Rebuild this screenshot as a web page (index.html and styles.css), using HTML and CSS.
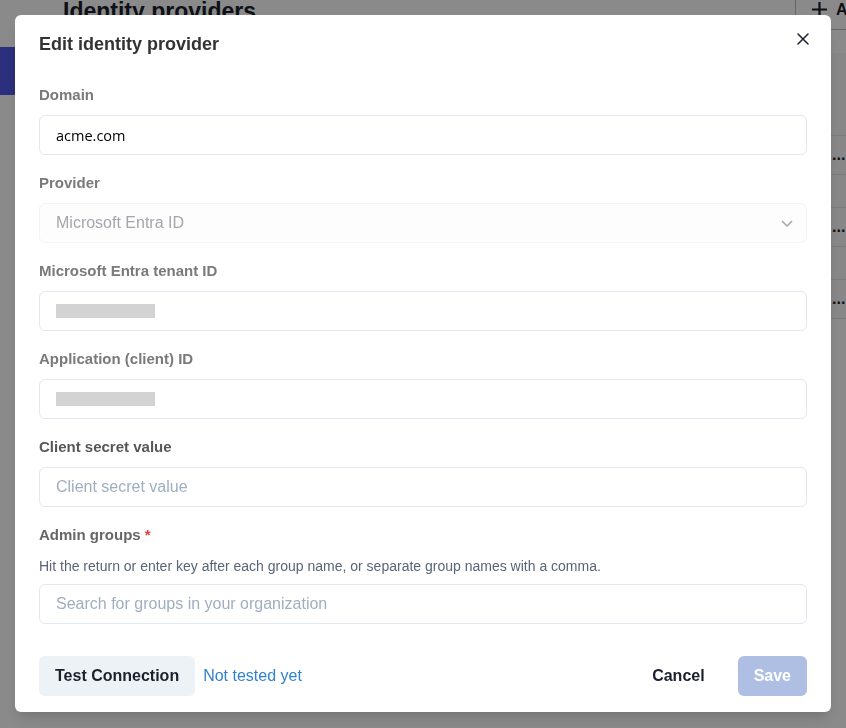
FILE: index.html
```html
<!DOCTYPE html>
<html lang="en">
<head>
<meta charset="utf-8">
<title>Edit identity provider</title>
<link rel="stylesheet" href="styles.css">
</head>
<body>
<div class="page">
  <nav class="side">
    <div class="nav-active"></div>
  </nav>
  <main class="main">
    <header class="page-header">
      <h1 class="page-title">Identity providers</h1>
      <button class="add-btn" type="button">
        <svg class="plus" width="15" height="15" viewBox="0 0 15 15"><path d="M7.5 0v15M0 7.5h15" stroke="#1a202c" stroke-width="2.2" fill="none"/></svg>
        <span>Add</span>
      </button>
    </header>
    <section class="table">
      <div class="table-head"></div>
      <div class="row"><div class="row-main"><span></span><span class="dots">...</span></div></div>
      <div class="row"><div class="row-main"><span></span><span class="dots">...</span></div></div>
      <div class="row row-last"><div class="row-main"><span></span><span class="dots">...</span></div></div>
    </section>
  </main>
</div>

<div class="overlay"></div>

<div class="modal" role="dialog" aria-label="Edit identity provider">
  <header class="modal-header">
    <h2 class="modal-title">Edit identity provider</h2>
    <button class="close-btn" type="button" aria-label="Close">
      <svg width="12" height="12" viewBox="0 0 12 12"><path d="M1 1L11 11M11 1L1 11" stroke="#1a202c" stroke-width="1.5" fill="none" stroke-linecap="round"/></svg>
    </button>
  </header>
  <div class="modal-body">
    <div class="field">
      <label class="label label-muted">Domain</label>
      <input class="input input-value" type="text" value="acme.com">
    </div>
    <div class="field">
      <label class="label label-muted">Provider</label>
      <div class="select select-disabled">
        <span>Microsoft Entra ID</span>
        <svg width="12" height="7" viewBox="0 0 12 7"><path d="M1 1l5 5 5-5" stroke="#a3a6ab" stroke-width="1.5" fill="none"/></svg>
      </div>
    </div>
    <div class="field">
      <label class="label label-muted">Microsoft Entra tenant ID</label>
      <div class="input"><span class="redacted"></span></div>
    </div>
    <div class="field">
      <label class="label label-muted">Application (client) ID</label>
      <div class="input"><span class="redacted"></span></div>
    </div>
    <div class="field">
      <label class="label label-dark">Client secret value</label>
      <input class="input" type="text" placeholder="Client secret value">
    </div>
    <div class="field field-last">
      <label class="label label-mid">Admin groups<span class="req">*</span></label>
      <p class="help">Hit the return or enter key after each group name, or separate group names with a comma.</p>
      <input class="input" type="text" placeholder="Search for groups in your organization">
    </div>
  </div>
  <footer class="modal-footer">
    <button class="btn btn-gray" type="button">Test Connection</button>
    <span class="status">Not tested yet</span>
    <span class="spacer"></span>
    <button class="btn btn-ghost" type="button">Cancel</button>
    <button class="btn btn-primary" type="button" disabled>Save</button>
  </footer>
</div>
</body>
</html>
```

FILE: styles.css
```css
html, body {
  margin: 0;
  height: 100%;
  overflow: hidden;
}

body {
  font-family: "Liberation Sans", Arial, sans-serif;
  background: #ffffff;
  color: #1a202c;
}

/* ---------- background page ---------- */
.page {
  width: 945px;
  display: grid;
  grid-template-columns: 48px 1fr;
}

.side {
  padding-top: 47px;
}

.nav-active {
  height: 48px;
  background: #5158e6;
}

.main {
  padding-left: 15px;
}

.page-header {
  display: flex;
  align-items: flex-start;
  height: 30px;
}

.page-title {
  flex: 1;
  margin: 0;
  font-size: 23px;
  line-height: 23px;
  font-weight: 700;
  color: #1a202c;
}

.add-btn {
  flex: none;
  box-sizing: border-box;
  width: 150px;
  height: 41px;
  margin-top: -11px;
  padding: 0 0 0 16px;
  display: flex;
  align-items: center;
  gap: 9px;
  background: #ffffff;
  border: 1px solid #b8bfc9;
  font-family: inherit;
  font-size: 16px;
  font-weight: 700;
  color: #1a202c;
}

.plus {
  flex: none;
}

.table {
  margin-top: 23px;
  background: #f9fafb;
}

.table-head {
  height: 82px;
}

.row {
  height: 72px;
  box-sizing: border-box;
  border-top: 1px solid #dde2ea;
}

.row-last {
  height: auto;
}

.row-main {
  height: 39px;
  box-sizing: border-box;
  border-bottom: 1px solid #dde2ea;
  display: grid;
  grid-template-columns: 1fr 113px;
  line-height: 38px;
}

.dots {
  font-size: 16px;
  font-weight: 700;
  color: #1a202c;
}

/* ---------- overlay & modal ---------- */
.overlay {
  position: fixed;
  inset: 0;
  background: rgba(0, 0, 0, 0.46);
}

.modal {
  position: fixed;
  top: 15px;
  left: 15px;
  width: 816px;
  background: #ffffff;
  border-radius: 6px;
  box-shadow: 0 10px 15px -3px rgba(0, 0, 0, 0.12), 0 4px 6px -2px rgba(0, 0, 0, 0.06);
}

.modal-header {
  padding: 15px 24px 0;
}

.modal-title {
  margin: 0;
  font-size: 18px;
  line-height: 28px;
  font-weight: 700;
  color: #333333;
}

.close-btn {
  position: absolute;
  top: 8px;
  right: 12px;
  width: 32px;
  height: 32px;
  padding: 0;
  border: 0;
  background: transparent;
  display: flex;
  align-items: center;
  justify-content: center;
}

.modal-body {
  padding: 26px 24px 0;
}

.field {
  display: flex;
  flex-direction: column;
  margin-bottom: 17px;
}

.field-last {
  margin-bottom: 0;
}

.label {
  font-size: 15px;
  line-height: 22px;
  font-weight: 700;
  margin-bottom: 9px;
}

.label-muted {
  color: #7a7a7a;
}

.label-dark {
  color: #575757;
}

.label-mid {
  color: #666666;
}

.req {
  color: #e53e3e;
  margin-left: 4px;
}

.help {
  margin: 1px 0 8px;
  font-size: 14px;
  line-height: 20px;
  color: #5a6478;
}

.input {
  box-sizing: border-box;
  height: 40px;
  width: 100%;
  margin: 0;
  padding: 0 16px;
  border: 1px solid #e2e8f0;
  border-radius: 6px;
  background: #ffffff;
  font-family: "Liberation Sans", Arial, sans-serif;
  font-size: 16px;
  color: #1a202c;
  outline: none;
  display: flex;
  align-items: center;
}

.input::placeholder {
  color: #a0aec0;
  opacity: 1;
}

.input-value {
  font-family: "Open Sans", "Noto Sans", sans-serif;
  font-size: 14.5px;
  color: #000000;
}

.redacted {
  display: block;
  width: 99px;
  height: 14px;
  background: #d3d3d3;
}

.select {
  box-sizing: border-box;
  height: 40px;
  padding: 0 13px 0 16px;
  border: 1px solid #f2f4f7;
  border-radius: 6px;
  background: #fdfdfd;
  display: flex;
  align-items: center;
  justify-content: space-between;
  font-size: 16px;
  color: #a3a6ab;
}

.modal-footer {
  display: flex;
  align-items: center;
  padding: 32px 24px 16px;
}

.btn {
  height: 40px;
  padding: 0 16px;
  border: 0;
  border-radius: 6px;
  font-family: "Liberation Sans", Arial, sans-serif;
  font-size: 16px;
  font-weight: 700;
  color: #1a202c;
  background: transparent;
}

.btn-gray {
  background: #edf2f7;
}

.status {
  margin-left: 8px;
  font-size: 16px;
  color: #3182ce;
}

.spacer {
  flex: 1;
}

.btn-ghost {
  margin-right: 17px;
}

.btn-primary {
  background: #afbfe3;
  color: #ffffff;
}
```
